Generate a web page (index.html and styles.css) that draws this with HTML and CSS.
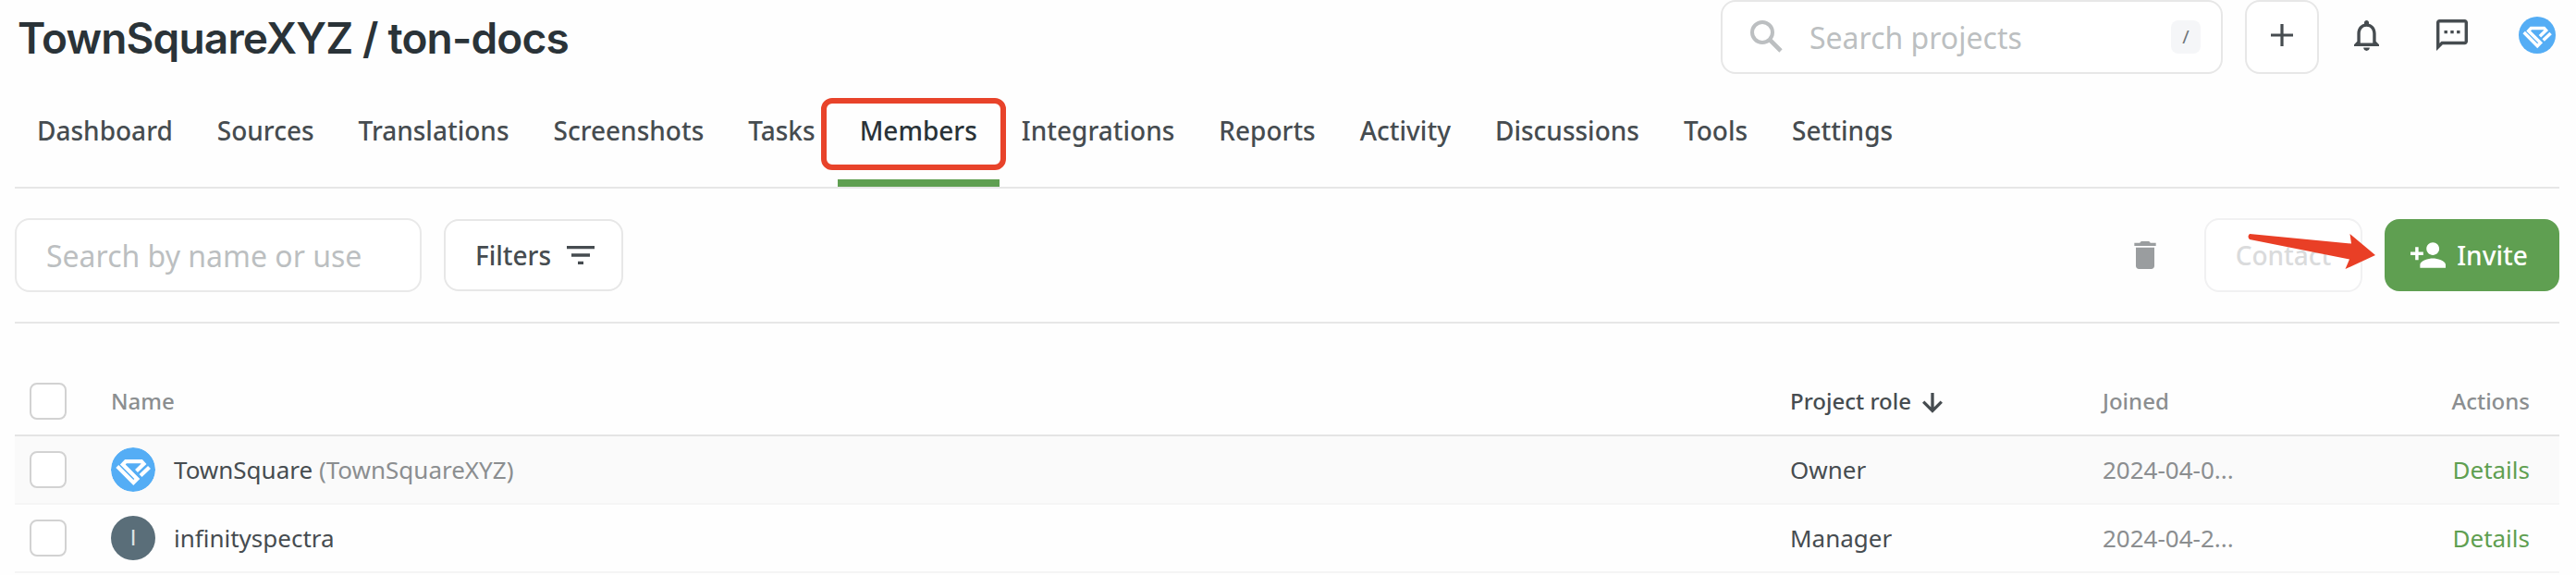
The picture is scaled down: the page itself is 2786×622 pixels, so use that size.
FILE: index.html
```
<!DOCTYPE html>
<html lang="en">
<head>
<meta charset="utf-8">
<title>TownSquareXYZ / ton-docs</title>
<link rel="stylesheet" href="styles.css">
</head>
<body>
<svg width="0" height="0" class="defs">
  <symbol id="logo" viewBox="0 0 48 48">
    <circle cx="24" cy="24" r="24" fill="#54adf5"/>
    <g fill="none" stroke="#fff" stroke-width="4.200">
      <path d="M6.800 20.500L24.300 38L28.300 34L12.800 18.500L16 15.100H33L35.500 17.800L27.500 25.500"/>
      <path d="M32 30.500L41.500 21.500"/>
    </g>
  </symbol>
</svg>
<header class="top">
  <h1 class="title">TownSquareXYZ / ton-docs</h1>
  <div class="tools">
    <div class="search">
      <svg class="search-icon" viewBox="0 0 35 35"><circle cx="13" cy="13" r="11" fill="none" stroke="#bcbfc1" stroke-width="4"/><path d="M21 21L33 33" stroke="#bcbfc1" stroke-width="4.600"/></svg>
      <span class="search-text">Search projects</span>
      <kbd class="key">/</kbd>
    </div>
    <button class="plus"><svg width="24" height="24" viewBox="0 0 24 24"><path d="M12 0V24M0 12H24" stroke="#464c50" stroke-width="3.200"/></svg></button>
    <svg class="bell" viewBox="4 2.500 16 19.500"><path fill="#464c50" d="M12 22c1.100 0 2-.9 2-2h-4c0 1.100.9 2 2 2zm6-6v-5c0-3.070-1.630-5.640-4.500-6.320V4c0-.83-.67-1.500-1.500-1.500s-1.500.67-1.500 1.500v.68C7.640 5.360 6 7.920 6 11v5l-2 2v1h16v-1l-2-2zm-2 1H8v-6c0-2.480 1.510-4.500 4-4.500s4 2.020 4 4.500v6z"/></svg>
    <svg class="chat" viewBox="2 2 20 20"><path fill="#464c50" d="M20 2H4c-1.100 0-2 .9-2 2v18l4-4h14c1.100 0 2-.9 2-2V4c0-1.100-.9-2-2-2zm0 14H5.200L4 17.200V4h16v12zM7 9h2v2H7zM11 9h2v2h-2zM15 9h2v2h-2z"/></svg>
    <svg class="me"><use href="#logo"/></svg>
  </div>
</header>
<nav class="tabs">
  <a class="tab">Dashboard</a><a class="tab">Sources</a><a class="tab">Translations</a><a class="tab">Screenshots</a><a class="tab">Tasks</a><a class="tab active">Members<span class="highlight"></span></a><a class="tab">Integrations</a><a class="tab">Reports</a><a class="tab">Activity</a><a class="tab">Discussions</a><a class="tab">Tools</a><a class="tab">Settings</a>
</nav>
<section class="bar">
  <div class="field"><span>Search by name or use</span></div>
  <button class="filters">Filters<svg width="30" height="20" viewBox="0 0 30 20"><path fill="#464c50" d="M0 0H30V3.300H0zM5 8.300H25V11.700H5zM12 16.700H18V20H12z"/></svg></button>
  <svg class="trash" viewBox="5 3 14 18"><path fill="#9a9d9f" d="M6 19c0 1.100.9 2 2 2h8c1.100 0 2-.9 2-2V7H6v12zM19 4h-3.500l-1-1h-5l-1 1H5v2h14V4z"/></svg>
  <button class="contact">Contact</button>
  <button class="invite"><svg width="38" height="28" viewBox="1 4 22 16"><path fill="#fff" d="M15 12c2.210 0 4-1.790 4-4s-1.790-4-4-4-4 1.790-4 4 1.790 4 4 4zm-9-2V7H4v3H1v2h3v3h2v-3h3v-2H6zm9 4c-2.670 0-8 1.340-8 4v2h16v-2c0-2.660-5.330-4-8-4z"/></svg>Invite</button>
  <svg class="arrow" viewBox="0 0 138 38"><path fill="#e93f26" d="M2 0L112 10.500L110.500 0L138 23L105.500 38L110 27.500L2 6Q-1 3 2 0z"/></svg>
</section>
<main class="table">
  <div class="row head">
    <i class="box"></i><span class="name">Name</span>
    <span class="role">Project role<svg width="22" height="22" viewBox="0 0 22 22"><path d="M11 0V19.500M1.200 9.700L11 19.500L20.800 9.700" fill="none" stroke="#464c50" stroke-width="3.300"/></svg></span>
    <span>Joined</span><span class="end">Actions</span>
  </div>
  <div class="row odd">
    <i class="box"></i><span class="name"><svg class="avatar"><use href="#logo"/></svg>TownSquare&nbsp;<em>(TownSquareXYZ)</em></span>
    <span>Owner</span><span class="date">2024-04-0...</span><a class="end link">Details</a>
  </div>
  <div class="row">
    <i class="box"></i><span class="name"><b class="avatar initial">I</b>infinityspectra</span>
    <span>Manager</span><span class="date">2024-04-2...</span><a class="end link">Details</a>
  </div>
</main>
</body>
</html>
```
FILE: styles.css
```
* { box-sizing: border-box; }
body {
  margin: 0;
  padding: 0 18px 0 16px;
  height: 622px;
  overflow: hidden;
  background: #fefefe;
  color: #464c50;
  font-family: "Noto Sans", sans-serif;
}
.defs { position: absolute; }
button { font: inherit; color: inherit; background: #fff; padding: 0; border: 2px solid #e7e7e7; border-radius: 16px; display: flex; align-items: center; justify-content: center; }
.top { display: flex; justify-content: space-between; height: 80px; }
.title { margin: 0 0 0 3px; font: 600 46px/82px Inter, sans-serif; color: #2a3338; letter-spacing: -0.83px; white-space: nowrap; }
.tools { display: flex; align-items: center; padding-right: 4px; }
.search { width: 543px; height: 80px; display: flex; align-items: center; padding: 0 22px 0 30px; border: 2px solid #e7e7e7; border-radius: 16px; background: #fff; }
.search-icon { width: 35px; height: 35px; margin-bottom: 2px; }
.search-text { flex: 1; margin-left: 29px; padding-top: 2px; font-size: 32px; line-height: 44px; color: #bcbfc1; }
.key { width: 32px; height: 36px; border-radius: 8px; background: #f5f6f8; font: 20px/36px "Noto Sans", sans-serif; text-align: center; color: #6f7477; }
.plus { width: 80px; height: 80px; margin-left: 24px; padding-bottom: 4px; }
.bell { width: 27px; height: 33px; margin: 0 0 3px 38px; }
.chat { width: 34px; height: 34px; margin: 0 0 5px 62px; }
.me { width: 40px; height: 40px; margin: 0 0 4px 55px; }
.tabs { display: flex; height: 124px; padding-top: 39px; border-bottom: 2px solid #e7e7e7; }
.tab { position: relative; height: 83px; padding: 0 24px; font-size: 28px; font-weight: 500; line-height: 44px; }
.tab.active { color: #2a3338; border-bottom: 8px solid #5f9f51; }
.highlight { position: absolute; left: -18px; top: -13px; width: 200px; height: 78px; border: 6px solid #e8432a; border-radius: 12px; }
.bar { position: relative; display: flex; align-items: center; height: 146px; border-bottom: 2px solid #e7e7e7; font-size: 28px; font-weight: 500; }
.field { width: 440px; height: 80px; padding: 0 32px; border: 2px solid #e9e9e9; border-radius: 16px; background: #fff; font-size: 32px; font-weight: 400; line-height: 78px; color: #bcbfc1; }
.field span { display: block; overflow: hidden; white-space: nowrap; }
.filters { width: 194px; height: 78px; margin-left: 24px; padding-left: 3px; gap: 17px; }
.trash { width: 24px; height: 30px; margin: 0 0 0 auto; }
.contact { width: 171px; height: 80px; margin-left: 52px; color: #dadbdc; border-color: #f1f1f2; }
.invite { width: 189px; height: 78px; margin-left: 24px; padding-right: 6px; gap: 12px; border: 0; background: #5f9f51; color: #fff; }
.arrow { position: absolute; left: 2415px; top: 49px; width: 138px; height: 38px; }
.table { padding-top: 46px; font-size: 26px; }
.row { display: grid; grid-template-columns: 88px 1816px 338px 1fr auto; align-items: center; height: 74px; padding: 0 32px 0 16px; border-bottom: 2px solid #f5f5f5; }
.head { height: 76px; padding-top: 1px; font-size: 24px; font-weight: 500; color: #8b8e90; border-color: #e4e4e4; }
.odd { background: #fafafa; }
.box { width: 40px; height: 40px; border: 2px solid #d2d2d2; border-radius: 8px; background: #fff; }
.name, .role { display: flex; align-items: center; }
.role { gap: 12px; color: #464c50; }
.role svg { margin-top: 4px; }
.avatar { width: 48px; height: 48px; margin-right: 20px; border-radius: 50%; }
.initial { background: #5a6e79; color: #dfe4e6; font: 400 24px/48px "Liberation Sans", sans-serif; text-align: center; }
em { font-style: normal; }
em, .date { color: #8b8e90; }
.link { color: #5f9f51; }
```
